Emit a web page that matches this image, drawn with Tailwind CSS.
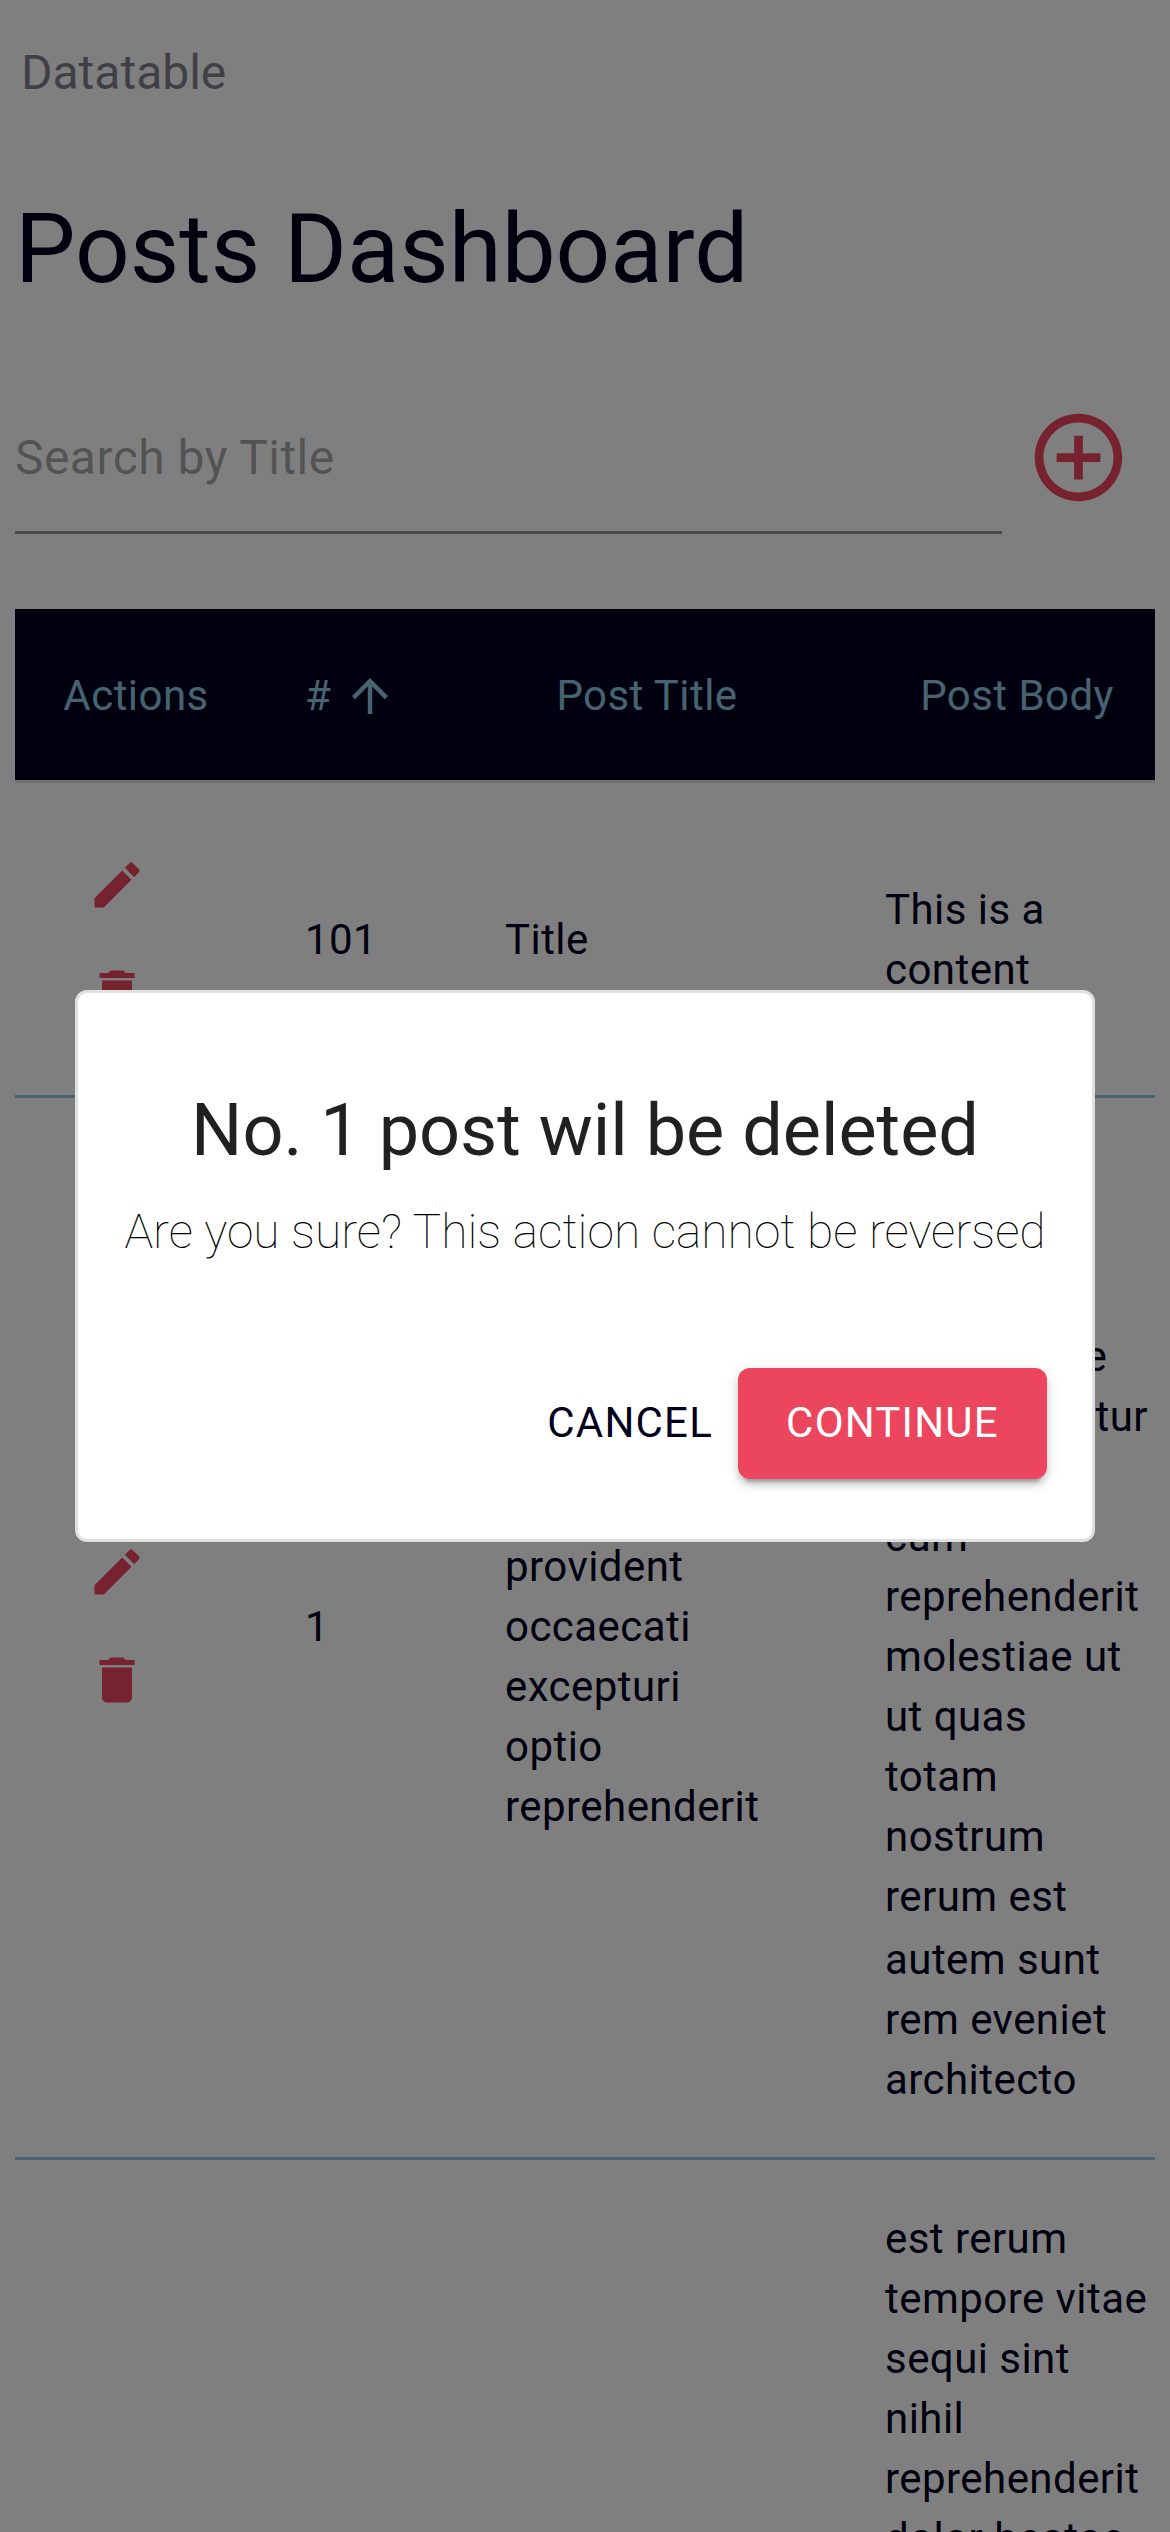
<!DOCTYPE html>
<html lang="en">
<head>
<meta charset="utf-8">
<title>Datatable</title>
<script src="https://cdn.jsdelivr.net/npm/@tailwindcss/browser@4"></script>
</head>
<body class="relative h-[2532px] w-[1170px] overflow-hidden bg-white font-[Roboto,sans-serif] text-[#00001c]">

<svg class="hidden">
  <symbol id="edit" viewBox="0 0 24 24"><path d="M3 17.25V21h3.75L17.81 9.94l-3.75-3.75L3 17.25zM20.71 7.04c.39-.39.39-1.02 0-1.41l-2.34-2.34a.9959.9959 0 0 0-1.41 0l-1.83 1.83 3.75 3.75 1.83-1.83z"/></symbol>
  <symbol id="delete" viewBox="0 0 24 24"><path d="M6 19c0 1.1.9 2 2 2h8c1.1 0 2-.9 2-2V7H6v12zM19 4h-3.5l-1-1h-5l-1 1H5v2h14V4z"/></symbol>
</svg>

<main class="flex h-[2532px] flex-col overflow-hidden px-[15px]">
  <div class="mt-[37px] ml-1.5 text-5xl/[72px] text-[#00001c]/50">Datatable</div>
  <h1 class="mt-[84px] text-[96px]/[112px]">Posts Dashboard</h1>

  <div class="mt-20 flex h-[149px] items-start">
    <div class="h-[149px] w-[987px] border-b-[3px] border-black/[.42] pt-[38px] text-5xl/[69px] tracking-[0.45px] text-black/[.37]">Search by Title</div>
    <svg class="mt-[19.5px] ml-[24px] size-[105px] fill-[#ec465f]" viewBox="0 0 24 24"><path d="M13 7h-2v4H7v2h4v4h2v-4h4v-2h-4V7zm-1-5C6.48 2 2 6.48 2 12s4.48 10 10 10 10-4.480 10-10S17.520 2 12 2zm0 18c-4.410 0-8-3.590-8-8s3.590-8 8-8 8 3.590 8 8-3.590 8-8 8z"/></svg>
  </div>

  <div class="mt-[75px] w-[1140px] shrink-0 overflow-hidden text-[42px]/[60px] tracking-[0.45px]">
    <div class="grid w-[1182px] grid-cols-[242px_200px_380px_360px]">

      <div class="col-span-4 grid h-[174px] grid-cols-subgrid items-center border-b-[3px] border-[#e0e0e0] bg-[#00001c] pt-[3px] text-[#8cc6e0]">
        <div class="text-center">Actions</div>
        <div class="flex items-center gap-[12px] pl-12"><span>#</span><svg class="size-[54px] fill-current" viewBox="0 0 24 24"><path d="M4 12l1.410 1.410L11 7.830V20h2V7.830l5.580 5.590L20 12l-8-8-8 8z"/></svg></div>
        <div class="text-center">Post Title</div>
        <div class="text-center">Post Body</div>
      </div>

      <div class="col-span-4 grid h-[315px] grid-cols-subgrid items-center border-b-[3px] border-[#8cc6e0]">
        <div class="flex flex-col pl-12">
          <button class="size-[108px] p-6"><svg class="size-[60px] fill-[#ec465f]"><use href="#edit"/></svg></button>
          <button class="size-[108px] p-6"><svg class="size-[60px] fill-[#ec465f]"><use href="#delete"/></svg></button>
        </div>
        <div class="pt-[2px] pl-12">101</div>
        <div class="pt-[2px] pl-12">Title</div>
        <div class="pt-[2px] pl-12">This is a<br>content</div>
      </div>

      <div class="col-span-4 grid h-[1062px] grid-cols-subgrid items-center border-b-[3px] border-[#8cc6e0]">
        <div class="flex flex-col pb-[3px] pl-12">
          <button class="size-[108px] p-6"><svg class="size-[60px] fill-[#ec465f]"><use href="#edit"/></svg></button>
          <button class="size-[108px] p-6"><svg class="size-[60px] fill-[#ec465f]"><use href="#delete"/></svg></button>
        </div>
        <div class="pb-px pl-12">1</div>
        <div class="pb-px pl-12">sunt aut facere<br>repellat<br>provident<br>occaecati<br>excepturi<br>optio<br>reprehenderit</div>
        <div class="pt-[2px] pl-12 whitespace-nowrap"><p>quia et<br>suscipit<br>suscipit<br>recusandae<br>consequuntur<br>expedita et<br>cum<br>reprehenderit<br>molestiae ut<br>ut quas<br>totam<br>nostrum<br>rerum est</p><p class="mt-[3px]">autem sunt<br>rem eveniet<br>architecto</p></div>
      </div>

      <div class="col-span-4 grid grid-cols-subgrid items-center pt-[49px] pb-12">
        <div class="col-start-4 pl-12 whitespace-nowrap">est rerum<br>tempore vitae<br>sequi sint<br>nihil<br>reprehenderit<br>dolor beatae</div>
      </div>
    </div>
  </div>
</main>

<div class="absolute inset-0 flex items-center justify-center bg-black/50">
  <div class="flex h-[552px] w-[1020px] flex-col rounded-xl border-[3px] border-[#e0e0e0] bg-white px-[45px] pt-[90px]">
    <h2 class="text-center text-7xl/[96px] text-[#212121]">No. 1 post wil be deleted</h2>
    <p class="mt-[17px] text-center text-5xl/[72px] font-thin whitespace-nowrap text-black">Are you sure? This action cannot be reversed</p>
    <div class="mt-[100px] flex justify-end text-[42px]/[73px] tracking-[1.2px]">
      <button class="h-[111px] pr-[25px] pb-[2px] pl-[26px]">CANCEL</button>
      <button class="h-[111px] w-[309px] rounded-xl bg-[#ec465f] pb-[2px] text-white shadow-[0_9px_3px_-6px_rgba(0,0,0,0.2),0_6px_6px_0_rgba(0,0,0,0.14),0_3px_15px_0_rgba(0,0,0,0.12)]">CONTINUE</button>
    </div>
  </div>
</div>
</body>
</html>
